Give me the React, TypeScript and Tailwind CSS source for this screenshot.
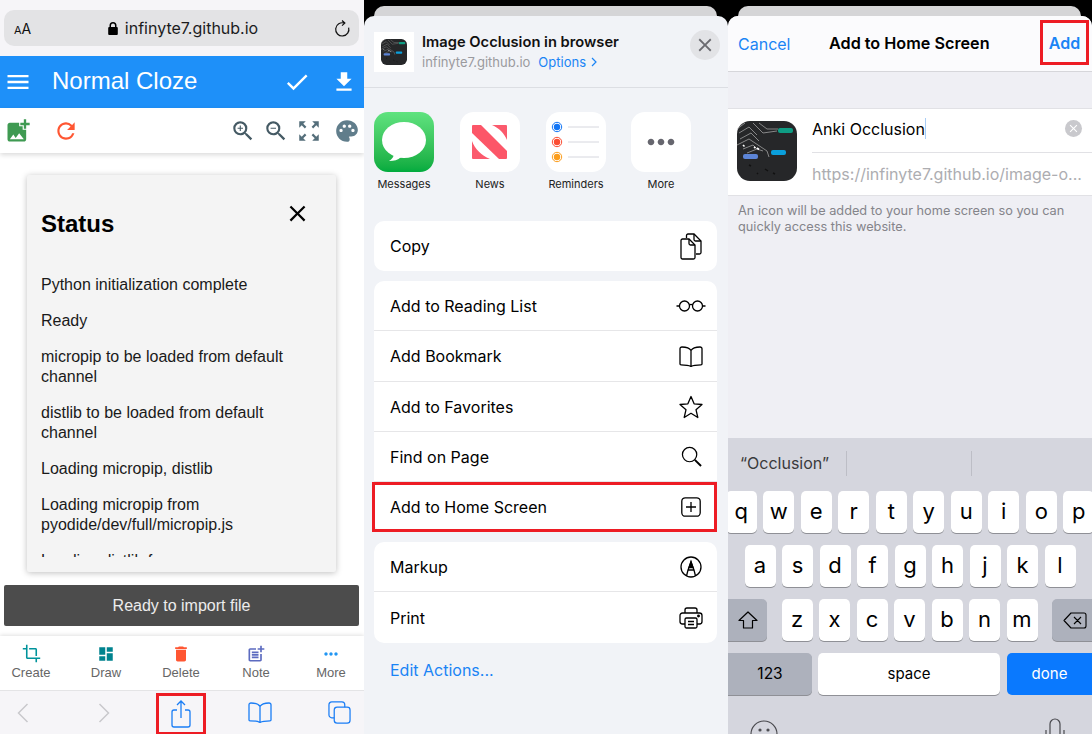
import React from 'react';
import {
  MdAddPhotoAlternate,
  MdCheck,
  MdClose,
  MdCrop,
  MdDashboard,
  MdDelete,
  MdFileDownload,
  MdMenu,
  MdMoreHoriz,
  MdPalette,
  MdPostAdd,
  MdRefresh,
  MdZoomIn,
  MdZoomOut,
  MdZoomOutMap,
} from 'react-icons/md';

const sf = "font-['Inter','Liberation_Sans',sans-serif]";

const AppThumb = ({ className }: { className: string }) => (
  <svg viewBox="0 0 60 60" className={className}>
    <rect width="60" height="60" rx="13" fill="#262729" />
    <g stroke="#c8c8c8" strokeWidth="0.6" fill="none">
      <path d="M0 8L8 2M2 12L12 6L20 14M3 18L14 12L22 20M0 24L12 18L24 26L30 30L32 36" />
      <path d="M6 28L16 24L20 28M10 32L20 28L26 30M16 2L26 12L40 10M22 2L30 8L41 8" />
    </g>
    <rect x="41" y="7" width="15" height="5" rx="2" fill="#0f9d84" />
    <rect x="34" y="29" width="15" height="5" rx="2" fill="#0a9fdc" />
    <rect x="6" y="33" width="15" height="5" rx="2" fill="#5c84d6" />
    <path d="M20 27l2 1.500M6 24l1.500 1.500M17 26l1.500 1" stroke="#fff" strokeWidth="1.600" />
    <path d="M12 44l2 1M28 48l3 2M36 52l2 1M20 52l1 1" stroke="#111" strokeWidth="1.500" />
  </svg>
);

const ie = 'fill-none stroke-black stroke-[1.300]';

const CopyIcon = () => (
  <svg viewBox="0 0 22 27" className={`w-[22px] h-[27px] ${ie}`}>
    <path d="M6.500 5V2.500A1.500 1.500 0 0 1 8 1h6l7 7v11.500a1.500 1.500 0 0 1-1.500 1.500H16" />
    <path d="M14 1v5.500A1.500 1.500 0 0 0 15.500 8H21" />
    <path d="M2.500 6H9l6 6v12.500a1.500 1.500 0 0 1-1.500 1.500h-11a1.500 1.500 0 0 1-1.500-1.500v-17A1.500 1.500 0 0 1 2.500 6z" />
    <path d="M9 6v4.500a1.500 1.500 0 0 0 1.500 1.500H15" />
  </svg>
);
const GlassesIcon = () => (
  <svg viewBox="0 0 30 14" className={`w-[30px] h-[14px] flex-none ${ie}`}>
    <circle cx="8.500" cy="7" r="5" />
    <circle cx="21.500" cy="7" r="5" />
    <path d="M13.500 6c1-.8 2-.8 3 0M3.500 7H.5M26.500 7h3" />
  </svg>
);
const BookIcon = ({ className = ie }: { className?: string }) => (
  <svg viewBox="0 0 24 21" className={`w-[24px] h-[21px] ${className}`}>
    <path d="M12 4.500C10.500 2 7 1 3 1 1.800 1 1 1.800 1 2.800V18c0 .5.400.800 1 .800 4 0 7.500.200 10 1.700 2.500-1.500 6-1.700 10-1.700.600 0 1-.300 1-.800V2.800C23 1.800 22.200 1 21 1 17 1 13.500 2 12 4.500zM12 4.500V20.500" />
  </svg>
);
const StarIcon = () => (
  <svg viewBox="0 0 24 24" className={`w-[24px] h-[24px] ${ie}`}>
    <path d="M12 1.500l3.100 7.300 7.900.7-6 5.200 1.800 7.800L12 18.300l-6.800 4.200L7 14.700 1 9.500l7.900-.7z" strokeLinejoin="round" />
  </svg>
);
const SearchIcon = () => (
  <svg viewBox="0 0 22 22" className={`w-[21px] h-[21px] ${ie}`}>
    <circle cx="9" cy="9" r="7.500" />
    <path d="M14.500 14.500L21 21" strokeWidth="2" />
  </svg>
);
const PlusBoxIcon = () => (
  <svg viewBox="0 0 20 20" className={`w-[20px] h-[20px] ${ie}`}>
    <rect x="0.800" y="0.800" width="18.400" height="18.400" rx="3.500" />
    <path d="M10 5v10M5 10h10" />
  </svg>
);
const MarkupIcon = () => (
  <svg viewBox="0 0 22 22" className={`w-[22px] h-[22px] ${ie}`}>
    <circle cx="11" cy="11" r="10" />
    <path d="M6.500 20l1.500-6 3-8 3 8 1.500 6M8 14h6" />
    <path d="M11 5.500L9 11.500h4z" fill="#000" />
  </svg>
);
const PrintIcon = () => (
  <svg viewBox="0 0 24 22" className={`w-[24px] h-[22px] ${ie}`}>
    <path d="M6 6V3a2 2 0 0 1 2-2h8a2 2 0 0 1 2 2v3" />
    <path d="M6 17H3.500A2.500 2.500 0 0 1 1 14.500V8.500A2.500 2.500 0 0 1 3.500 6h17A2.500 2.500 0 0 1 23 8.500v6a2.500 2.500 0 0 1-2.500 2.500H18" />
    <rect x="6" y="11" width="12" height="10" rx="1.500" />
    <path d="M9 14.500h6M9 17.500h6" />
    <circle cx="19.500" cy="9" r="0.800" fill="#000" />
  </svg>
);

const SafariBar = () => (
  <div className="h-[44px] bg-[#f6f5f8] border-t border-[#e4e4e6] flex items-center">
    <div className="w-[46px] flex justify-center">
      <svg viewBox="0 0 12 20" className="w-[12px] h-[20px] fill-none stroke-[#c9c9cc] stroke-[1.500]">
        <path d="M10.500 1L1.500 10l9 9" />
      </svg>
    </div>
    <div className="w-[110px] pl-[6px] flex justify-center">
      <svg viewBox="0 0 12 20" className="w-[12px] h-[20px] fill-none stroke-[#c9c9cc] stroke-[1.500]">
        <path d="M1.500 1l9 9-9 9" />
      </svg>
    </div>
    <div className="w-[50px] h-[42px] mt-[2px] border-[3px] border-[#ed1c24] flex items-center justify-center">
      <svg viewBox="0 0 20 28" className="w-[20px] h-[28px] fill-none stroke-[#1a7df5] stroke-[1.300]">
        <path d="M6 10H3a2 2 0 0 0-2 2v13a2 2 0 0 0 2 2h14a2 2 0 0 0 2-2V12a2 2 0 0 0-2-2h-3M10 18V1.500M6 5l4-4 4 4" />
      </svg>
    </div>
    <div className="w-[108px] flex justify-center">
      <BookIcon className="fill-none stroke-[#1a7df5] stroke-[1.300]" />
    </div>
    <svg viewBox="0 0 24 24" className="w-[23px] h-[23px] ml-[14px] fill-none stroke-[#1a7df5] stroke-[1.300]">
      <rect x="6.500" y="6.500" width="16.500" height="16.500" rx="3" />
      <path d="M6.500 17.500H4a3 3 0 0 1-3-3V4a3 3 0 0 1 3-3h10.500a3 3 0 0 1 3 3v2.500" />
    </svg>
  </div>
);

const NavItem = ({ icon, label }: { icon: React.ReactNode; label: string }) => (
  <div className="w-[75px] flex-none flex flex-col items-center pt-[7px]">
    <div className="h-[21px] flex items-center">{icon}</div>
    <span className="text-[13px] leading-[17px] text-[#666]">{label}</span>
  </div>
);

const statusLines = [
  'Python initialization complete',
  'Ready',
  'micropip to be loaded from default channel',
  'distlib to be loaded from default channel',
  'Loading micropip, distlib',
  'Loading micropip from pyodide/dev/full/micropip.js',
  'Loading distlib from',
];

const BrowserPane = () => (
  <div className="w-[364px] h-[734px] bg-white flex flex-col font-['Liberation_Sans',Arial,sans-serif] overflow-hidden">
    <div className="h-[56px] bg-[#f6f5f8] pl-[4px] pr-[5px] pt-[10px]">
      <div className={`h-[36px] rounded-[10px] bg-[#e3e3e5] flex items-center pl-[10px] pr-[8px] ${sf}`}>
        <span className="text-[#111] w-[24px] leading-none">
          <span className="text-[11px]">A</span>
          <span className="text-[14px]">A</span>
        </span>
        <div className="flex-1 flex items-center justify-center gap-[7px] text-[16px] text-[#1c1c1e] pr-[6px]">
          <svg viewBox="0 0 10 13" className="w-[10px] h-[13px] fill-black">
            <path d="M1.500 5V3.500a3.500 3.500 0 0 1 7 0V5h.3a1 1 0 0 1 1 1v6a1 1 0 0 1-1 1H1.200a1 1 0 0 1-1-1V6a1 1 0 0 1 1-1zM3 5h4V3.500a2 2 0 0 0-4 0z" />
          </svg>
          infinyte7.github.io
        </div>
        <svg viewBox="0 0 18 18" className="w-[17px] h-[17px] fill-none stroke-[#111] stroke-[1.300]">
          <path d="M11 3.300A7 7 0 1 0 15.500 8M8.500 0.500L11.500 3.300 8.500 6" />
        </svg>
      </div>
    </div>
    <div className="h-[52px] bg-[#1e90f9] flex items-center text-white pl-[4px] pr-[7px]">
      <MdMenu className="w-[28px] h-[28px]" />
      <span className="ml-[20px] text-[24px] flex-1 pb-[2px]">Normal Cloze</span>
      <MdCheck className="w-[28px] h-[28px] mr-[20px]" />
      <MdFileDownload className="w-[26px] h-[26px]" />
    </div>
    <div className="h-[45px] bg-white shadow-[0_2px_5px_rgba(0,0,0,0.15)] flex items-center pl-[4px] pr-[4px]">
      <MdAddPhotoAlternate className="w-[28px] h-[28px] text-[#3f9a52]" />
      <MdRefresh className="w-[26px] h-[26px] text-[#ff5632] ml-[21px] flex-none" />
      <div className="flex-1" />
      <MdZoomIn className="w-[26px] h-[26px] text-[#455a64]" />
      <MdZoomOut className="w-[26px] h-[26px] text-[#455a64] ml-[7px]" />
      <MdZoomOutMap className="w-[26px] h-[26px] text-[#546e7a] ml-[7px]" />
      <MdPalette className="w-[26px] h-[26px] text-[#607d8b] ml-[12px]" />
    </div>
    <div className="flex-1 flex flex-col pt-[22px]">
      <div className="ml-[27px] w-[309px] h-[397px] bg-[#f4f4f4] rounded-[2px] shadow-[0_1px_6px_rgba(0,0,0,0.25)] pl-[14px] pr-[20px] pt-[34px] pb-[15px] flex flex-col">
        <div className="flex items-center justify-between text-black">
          <h2 className="text-[24px] leading-[30px] font-bold">Status</h2>
          <MdClose className="w-[27px] h-[27px] -mt-[22px] mr-[5px]" />
        </div>
        <div className="mt-[36px] overflow-hidden flex-1 flex flex-col gap-[16px] text-[16px] leading-[20px] text-[#1a1a1a]">
          {statusLines.map((line) => (
            <p key={line}>{line}</p>
          ))}
        </div>
      </div>
      <div className="ml-[4px] mr-[5px] mt-[13px] h-[41px] pt-[1px] bg-[#4c4c4c] rounded-[2px] flex items-center justify-center text-white/90 text-[16px]">
        Ready to import file
      </div>
    </div>
    <div className="h-[54px] bg-white mt-[10px] flex shadow-[0_-1px_4px_rgba(0,0,0,0.12)]">
      <div className="flex -ml-[6.500px]">
        <NavItem icon={<MdCrop className="w-[19px] h-[19px] text-[#00939b]" />} label="Create" />
        <NavItem icon={<MdDashboard className="w-[18px] h-[18px] text-[#00838f]" />} label="Draw" />
        <NavItem icon={<MdDelete className="w-[20px] h-[20px] text-[#ff5632]" />} label="Delete" />
        <NavItem icon={<MdPostAdd className="w-[20px] h-[20px] text-[#5c6bc0]" />} label="Note" />
        <NavItem icon={<MdMoreHoriz className="w-[20px] h-[20px] text-[#2196f3]" />} label="More" />
      </div>
    </div>
    <SafariBar />
  </div>
);

const SheetTop = ({ className, children }: { className: string; children: React.ReactNode }) => (
  <div className="w-[364px] h-[734px] bg-black flex flex-col overflow-hidden">
    <div className="h-[16px] flex-none pl-[10px] pr-[11px] pt-[6px]">
      <div className="h-[10px] bg-[#d5d5d7] rounded-t-[10px]" />
    </div>
    <div className={`flex-1 min-h-0 rounded-t-[10px] flex flex-col overflow-hidden ${className}`}>{children}</div>
  </div>
);

const AppTile = ({ label, children }: { label: string; children: React.ReactNode }) => (
  <div className="w-[60px] flex flex-col items-center">
    <div className="w-[60px] h-[60px] rounded-[14px] bg-white overflow-hidden flex items-center justify-center">{children}</div>
    <span className="mt-[5px] text-[11px] leading-[14px] whitespace-nowrap text-[#222]">{label}</span>
  </div>
);

const ActionRow = ({ label, icon, h, last }: { label: string; icon: React.ReactNode; h: string; last?: boolean }) => (
  <div className={`${h} flex-none flex items-center justify-between pl-[16px] pr-[12px] ${last ? '' : 'border-b border-[#e6e6e8]'}`}>
    <span className="text-[16px] text-black">{label}</span>
    <span className="w-[28px] flex justify-center">{icon}</span>
  </div>
);

const SharePane = () => (
  <SheetTop className={`bg-[#f1f3f7] ${sf}`}>
    <div className="h-[72px] flex-none border-b border-[#dcdee3] flex pl-[10px] pr-[8px] pt-[16px]">
      <div className="w-[40px] h-[40px] bg-white flex items-center justify-center">
        <AppThumb className="w-[26px] h-[26px]" />
      </div>
      <div className="ml-[8px] flex-1">
        <div className="text-[14.700px] leading-[20px] font-semibold text-[#111]">Image Occlusion in browser</div>
        <div className="flex items-center text-[13px] leading-[18px] text-[#9a9a9e] mt-[1px]">
          infinyte7.github.io
          <span className="text-[#1a84f5] ml-[8px]">Options</span>
          <svg viewBox="0 0 6 10" className="w-[6px] h-[10px] ml-[5px] fill-none stroke-[#1a84f5] stroke-[1.200]">
            <path d="M1 1l4 4-4 4" />
          </svg>
        </div>
      </div>
      <div className="w-[30px] h-[30px] mt-[-2px] rounded-full bg-[#e2e3e6] flex items-center justify-center">
        <MdClose className="w-[22px] h-[22px] text-[#6b6b70]" />
      </div>
    </div>
    <div className="flex pl-[10px] pt-[24px] gap-[26px]">
      <AppTile label="Messages">
        <div className="w-full h-full bg-gradient-to-b from-[#5fe37f] to-[#00ab3e] flex items-center justify-center">
          <svg viewBox="0 0 46 42" className="w-[46px] h-[42px] fill-white">
            <ellipse cx="23" cy="19" rx="22" ry="18" />
            <path d="M13 32c0 4-2 6-5 8 5 0 9-1 12-4z" />
          </svg>
        </div>
      </AppTile>
      <AppTile label="News">
        <svg viewBox="0 0 36 36" className="w-[36px] h-[36px]">
          <path d="M1 1h8l26 26v7a1 1 0 0 1-1 1h-7L0 9V2a1 1 0 0 1 1-1z" fill="#fc5668" />
          <path d="M20 1h14a1 1 0 0 1 1 1v14C32 9 27 4 20 1zM0 17c3 8 9 14 18 18H1a1 1 0 0 1-1-1z" fill="#fb5a6d" />
        </svg>
      </AppTile>
      <AppTile label="Reminders">
        <svg viewBox="0 0 60 60" className="w-[60px] h-[60px]">
          {[
            { y: 15, c: '#1275f5' },
            { y: 30, c: '#fb4d33' },
            { y: 45, c: '#fb9d1c' },
          ].map((r) => (
            <g key={r.y}>
              <circle cx="11" cy={r.y} r="4.700" fill="none" stroke={r.c} strokeWidth="1" />
              <circle cx="11" cy={r.y} r="3.200" fill={r.c} />
              <path d={`M22 ${r.y}h31`} stroke="#d6d7de" strokeWidth="1" />
            </g>
          ))}
        </svg>
      </AppTile>
      <div className="-ml-[1px]">
        <AppTile label="More">
          <MdMoreHoriz className="w-[40px] h-[40px] text-[#66666e]" />
        </AppTile>
      </div>
    </div>
    <div className="ml-[10px] mr-[11px] mt-[30px] h-[50px] flex-none bg-white rounded-[10px] flex flex-col">
      <ActionRow h="h-[50px]" label="Copy" icon={<CopyIcon />} last />
    </div>
    <div className="ml-[10px] mr-[11px] mt-[10px] h-[251px] flex-none bg-white rounded-[10px] flex flex-col">
      <ActionRow h="h-[50px]" label="Add to Reading List" icon={<GlassesIcon />} />
      <ActionRow h="h-[51px]" label="Add Bookmark" icon={<BookIcon />} />
      <ActionRow h="h-[50px]" label="Add to Favorites" icon={<StarIcon />} />
      <ActionRow h="h-[50px]" label="Find on Page" icon={<SearchIcon />} />
      <div className="h-[50px] flex-none flex items-center justify-between -ml-[2px] border-[3px] border-[#ed1c24] pl-[15px] pr-[9px]">
        <span className="text-[16px] text-black">Add to Home Screen</span>
        <span className="w-[28px] flex justify-center">
          <PlusBoxIcon />
        </span>
      </div>
    </div>
    <div className="ml-[10px] mr-[11px] mt-[10px] h-[101px] flex-none bg-white rounded-[10px] flex flex-col">
      <ActionRow h="h-[50px]" label="Markup" icon={<MarkupIcon />} />
      <ActionRow h="h-[51px]" label="Print" icon={<PrintIcon />} last />
    </div>
    <div className="ml-[26px] mt-[15px] text-[16px] text-[#1a84f5]">Edit Actions...</div>
  </SheetTop>
);

const Key = ({ label }: { label: string }) => (
  <div className="w-[31px] h-[42px] flex-none bg-white rounded-[5px] shadow-[0_1px_0_#8f9096] flex items-center justify-center text-[22px] text-black pb-[2px]">
    {label}
  </div>
);

const AddPane = () => (
  <SheetTop className={`bg-[#efeff4] ${sf}`}>
    <div className="h-[56px] flex-none bg-[#fbfbfd] border-b border-[#d6d6da] flex items-center pl-[10px] pr-[3px]">
      <span className="text-[#1a84f5] text-[16px] w-[91px]">Cancel</span>
      <span className="text-[16.200px] font-semibold text-black flex-1">Add to Home Screen</span>
      <span className="w-[49px] h-[45px] border-[3px] border-[#ed1c24] flex items-center justify-center text-[#1a84f5] text-[16px] font-semibold mt-[-2px]">
        Add
      </span>
    </div>
    <div className="mt-[36px] h-[88px] flex-none bg-white border-y border-[#e1e1e5] flex pl-[9px]">
      <div className="pt-[12px]">
        <AppThumb className="w-[60px] h-[60px]" />
      </div>
      <div className="ml-[15px] flex-1 flex flex-col">
        <div className="h-[44px] border-b border-[#e1e1e5] flex items-center pr-[10px] pb-[4px] text-[16px] text-black">
          <span>Anki Occlusion</span>
          <span className="w-[1px] h-[21px] bg-[#a9cdf6]" />
          <div className="flex-1" />
          <div className="w-[17px] h-[17px] rounded-full bg-[#c9c9cd] flex items-center justify-center">
            <MdClose className="w-[13px] h-[13px] text-white" />
          </div>
        </div>
        <div className="flex-1 flex items-center text-[16px] text-[#adadb1] whitespace-nowrap">https://infinyte7.github.io/image-o...</div>
      </div>
    </div>
    <p className="px-[10px] pt-[7px] text-[12.750px] leading-[16px] text-[#84848a]">
      An icon will be added to your home screen so you can quickly access this website.
    </p>
    <div className="flex-1" />
    <div className="h-[296px] flex-none bg-[#d5d6de] flex flex-col overflow-hidden">
      <div className="h-[53px] flex-none flex items-center pb-[3px]">
        <span className="w-[118px] pl-[12px] text-[16px] text-[#3a3a3c]">“Occlusion”</span>
        <span className="w-px h-[25px] bg-[#bdbec6]" />
        <span className="w-[124px]" />
        <span className="w-px h-[25px] bg-[#bdbec6]" />
      </div>
      <div className="flex flex-none justify-center gap-[6.500px]">
        {'qwertyuiop'.split('').map((k) => (
          <Key key={k} label={k} />
        ))}
      </div>
      <div className="flex flex-none justify-center gap-[6.500px] mt-[12px]">
        {'asdfghjkl'.split('').map((k) => (
          <Key key={k} label={k} />
        ))}
      </div>
      <div className="flex flex-none justify-between mt-[12px]">
        <div className="w-[39px] h-[42px] bg-[#adb1bc] rounded-r-[5px] shadow-[0_1px_0_#8f9096] flex items-center justify-center">
          <svg viewBox="0 0 20 18" className="w-[20px] h-[18px] fill-none stroke-black stroke-[1.200]">
            <path d="M10 1L1 9.500h4.500V17h9V9.500H19z" strokeLinejoin="round" />
          </svg>
        </div>
        <div className="flex gap-[6.500px]">
          {'zxcvbnm'.split('').map((k) => (
            <Key key={k} label={k} />
          ))}
        </div>
        <div className="w-[40px] h-[42px] bg-[#adb1bc] rounded-l-[5px] shadow-[0_1px_0_#8f9096] flex items-center justify-center pl-[5px]">
          <svg viewBox="0 0 24 17" className="w-[24px] h-[17px] fill-none stroke-black stroke-[1.100]">
            <path d="M8 1h13a2 2 0 0 1 2 2v11a2 2 0 0 1-2 2H8L1 8.500zM11 5l7 7M18 5l-7 7" strokeLinejoin="round" />
          </svg>
        </div>
      </div>
      <div className="flex flex-none mt-[12px]">
        <div className="w-[84px] h-[42px] bg-[#adb1bc] rounded-r-[5px] shadow-[0_1px_0_#8f9096] flex items-center justify-center text-[15.500px] text-black">123</div>
        <div className="w-[182px] ml-[6px] h-[42px] bg-white rounded-[5px] shadow-[0_1px_0_#8f9096] flex items-center justify-center text-[15px] text-black">space</div>
        <div className="flex-1 ml-[7px] h-[42px] bg-[#0a79fe] rounded-l-[5px] flex items-center justify-center text-[15px] text-white">done</div>
      </div>
      <div className="flex flex-none justify-between pl-[22px] pr-[27px] mt-[25px]">
        <svg viewBox="0 0 28 28" className="w-[28px] h-[28px] fill-none stroke-[#4a4a4f] stroke-[1.200]">
          <circle cx="14" cy="14" r="13" />
          <circle cx="10" cy="10" r="1" fill="#4a4a4f" />
          <circle cx="18" cy="10" r="1" fill="#4a4a4f" />
        </svg>
        <svg viewBox="0 0 20 28" className="w-[20px] h-[28px] -mt-[2px] fill-none stroke-[#4a4a4f] stroke-[1.200]">
          <rect x="5" y="1" width="10" height="20" rx="5" />
          <path d="M1 12v4a9 9 0 0 0 18 0v-4" />
        </svg>
      </div>
    </div>
  </SheetTop>
);

export default function App() {
  return (
    <div className="flex w-[1092px] h-[734px] overflow-hidden">
      <BrowserPane />
      <SharePane />
      <AddPane />
    </div>
  );
}
